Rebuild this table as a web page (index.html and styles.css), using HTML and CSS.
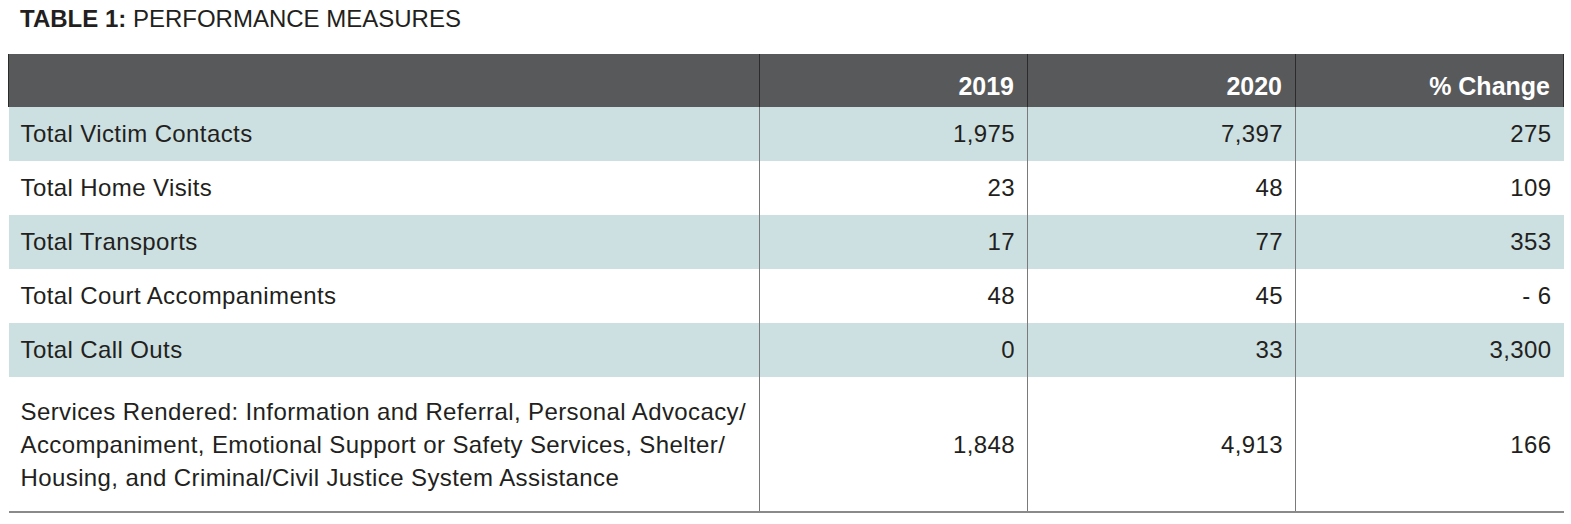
FILE: index.html
```html
<!DOCTYPE html>
<html>
<head>
<meta charset="utf-8">
<link rel="stylesheet" href="styles.css">
</head>
<body>
<div class="page">
  <h1 class="title"><b>TABLE 1:</b> PERFORMANCE MEASURES</h1>
  <table class="perf">
    <colgroup>
      <col class="c-label"><col class="c-num"><col class="c-num"><col class="c-num">
    </colgroup>
    <thead>
      <tr><th></th><th>2019</th><th>2020</th><th>% Change</th></tr>
    </thead>
    <tbody>
      <tr class="shade"><td>Total Victim Contacts</td><td>1,975</td><td>7,397</td><td>275</td></tr>
      <tr><td>Total Home Visits</td><td>23</td><td>48</td><td>109</td></tr>
      <tr class="shade"><td>Total Transports</td><td>17</td><td>77</td><td>353</td></tr>
      <tr><td>Total Court Accompaniments</td><td>48</td><td>45</td><td>- 6</td></tr>
      <tr class="shade"><td>Total Call Outs</td><td>0</td><td>33</td><td>3,300</td></tr>
      <tr class="tall"><td>Services Rendered: Information and Referral, Personal Advocacy/ Accompaniment, Emotional Support or Safety Services, Shelter/ Housing, and Criminal/Civil Justice System Assistance</td><td>1,848</td><td>4,913</td><td>166</td></tr>
    </tbody>
  </table>
</div>
</body>
</html>
```
FILE: styles.css
```css
html, body {
  margin: 0;
  padding: 0;
  background: #ffffff;
}
body {
  font-family: "Liberation Sans", Arial, sans-serif;
  color: #231f20;
}
.page {
  padding: 6px 0 0 8px;
}
.title {
  margin: 0 0 0 12px;
  font-size: 24px;
  font-weight: normal;
  line-height: 26px;
  height: 48px;
  color: #231f20;
}
.title b {
  font-weight: bold;
}
.perf {
  border-collapse: collapse;
  width: 1555px;
  table-layout: fixed;
  font-size: 24px;
}
.c-label { width: 751px; }
.c-num { width: 268px; }
.perf th {
  background: #58595b;
  color: #ffffff;
  font-weight: bold;
  font-size: 25px;
  text-align: right;
  height: 53px;
  padding: 0 13px 6px 12px;
  vertical-align: bottom;
  border-left: 1px solid #2b2b2b;
  border-right: 1px solid #2b2b2b;
  box-sizing: border-box;
}
.perf td {
  height: 54px;
  padding: 0 12px 0 12px;
  text-align: right;
  vertical-align: middle;
  letter-spacing: 0.4px;
  border-left: 1px solid #7a7a7a;
  box-sizing: border-box;
}
.perf td:first-child {
  text-align: left;
  padding-right: 0;
  border-left: none;
}
.perf tr.shade td {
  background: #cde0e1;
}
.perf tr.tall td {
  height: 135px;
  line-height: 33px;
  border-bottom: 2px solid #8a8a8a;
}
```
